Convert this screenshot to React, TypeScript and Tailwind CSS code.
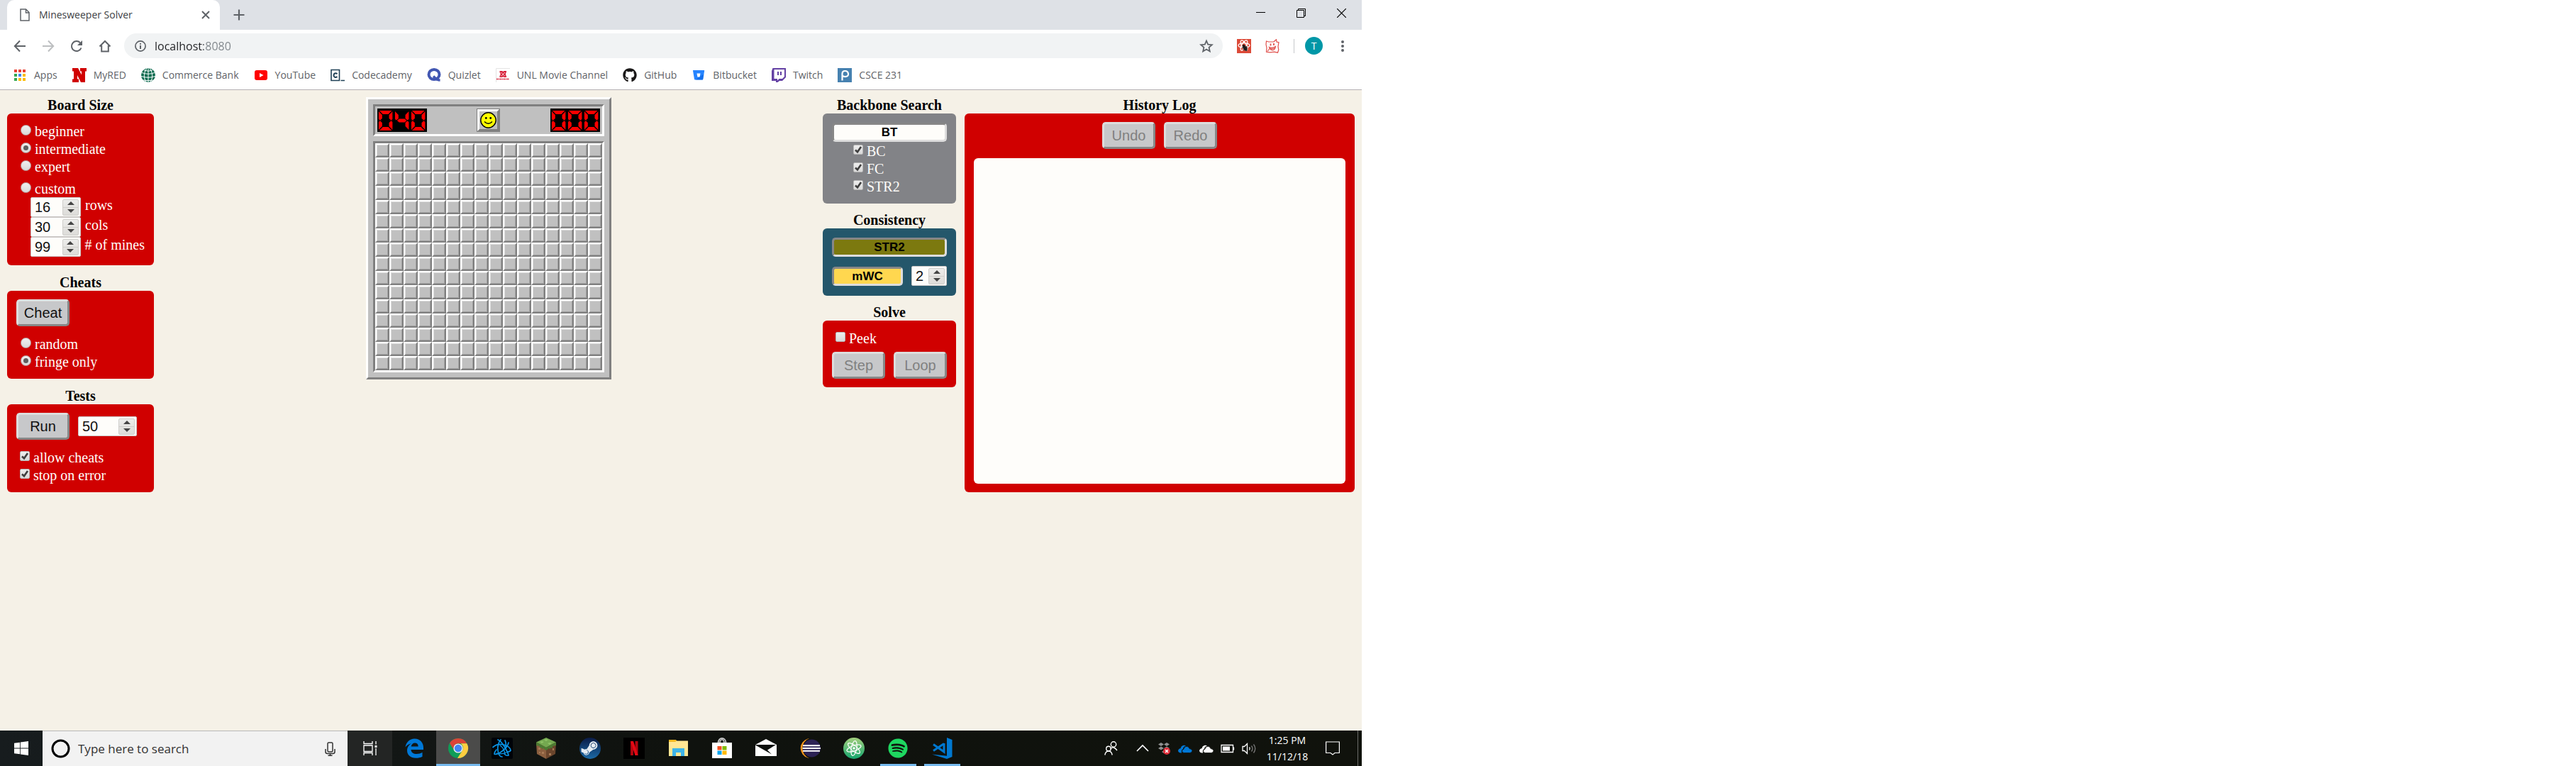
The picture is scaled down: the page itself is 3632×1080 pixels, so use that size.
import { useState, type ReactNode } from "react";
import { FaGithub, FaSpotify, FaSteamSymbol } from "react-icons/fa";

const uiFont = "font-['Open_Sans','Noto_Sans',sans-serif]";

/* ---------- browser chrome ---------- */

function TabStrip() {
  return (
    <div className="flex h-[42px] bg-[#dee1e6] pl-[10px]">
      <div className="flex w-[300px] items-center rounded-t-[10px] bg-white pr-[14px] pl-[18px] text-[#3c4043]">
        <svg className="h-[18px] w-[14px]" viewBox="0 0 14 18" fill="none" stroke="#5f6368" strokeWidth="1.5">
          <path d="M1 1h7.500l4.500 4.500V17H1zM8.500 1v5H13" />
        </svg>
        <span className="ml-[13px] flex-1 text-[14px] leading-5 text-[#3c4043]">Minesweeper Solver</span>
        <button aria-label="Close tab">
          <svg className="size-3" viewBox="0 0 12 12" stroke="#5f6368" strokeWidth="2">
            <path d="M1 1l10 10M11 1L1 11" />
          </svg>
        </button>
      </div>
      <button aria-label="New tab" className="ml-[19px]">
        <svg className="size-4" viewBox="0 0 16 16" stroke="#5f6368" strokeWidth="2.200">
          <path d="M8 .5v15M.5 8h15" />
        </svg>
      </button>
      <div className="ml-auto flex h-[36px]">
        <button aria-label="Minimize" className="grid w-[57px] place-items-center">
          <svg className="h-[13px] w-[13px]" viewBox="0 0 13 13" stroke="#000" strokeWidth="1">
            <path d="M0 5.500h13" />
          </svg>
        </button>
        <button aria-label="Restore" className="grid w-[57px] place-items-center">
          <svg className="h-[13px] w-[13px]" viewBox="0 0 13 13" fill="none" stroke="#000" strokeWidth="1">
            <path d="M.5 2.500h10v10H.5zM2.500 2.500v-2h10v10h-2" />
          </svg>
        </button>
        <button aria-label="Close" className="grid w-[57px] place-items-center">
          <svg className="h-[13px] w-[13px]" viewBox="0 0 13 13" stroke="#000" strokeWidth="1.200">
            <path d="M0 0l13 13M13 0L0 13" />
          </svg>
        </button>
      </div>
    </div>
  );
}

function NavButton({ label, children }: { label: string; children: ReactNode }) {
  return (
    <button aria-label={label} className="grid w-10 place-items-center">
      <svg className="size-[18px]" viewBox="0 0 18 18" fill="none" stroke="#5f6368" strokeWidth="2">
        {children}
      </svg>
    </button>
  );
}

function Toolbar() {
  const [url, setUrl] = useState("localhost:8080");
  return (
    <div className="flex h-[44px] items-center bg-white pt-px pr-2 pl-2">
      <div className="flex w-[167px]">
        <NavButton label="Back">
          <path d="M17 9H2M9 1.500L1.800 9 9 16.500" />
        </NavButton>
        <NavButton label="Forward">
          <path stroke="#bdbfc1" d="M1 9h15M9 1.500L16.200 9 9 16.500" />
        </NavButton>
        <NavButton label="Reload">
          <path d="M15.500 11.500A7 7 0 1 1 14 4.200" />
          <path d="M17 1v7h-7z" fill="#5f6368" stroke="none" />
        </NavButton>
        <NavButton label="Home">
          <path d="M4.200 8v8.500h9.600V8M1.500 9.500L9 2l7.500 7.500" />
        </NavButton>
      </div>
      <div className="flex h-[35px] flex-1 items-center rounded-full bg-[#f1f3f4] pr-[13px] pl-[15px]">
        <svg className="size-4" viewBox="0 0 16 16" fill="none" stroke="#5f6368" strokeWidth="1.700">
          <circle cx="8" cy="8" r="7.100" />
          <path d="M8 7v5M8 4v1.800" strokeWidth="2" />
        </svg>
        <input
          aria-label="Address"
          value={url}
          onChange={(e) => setUrl(e.target.value)}
          className="ml-3 flex-1 bg-linear-to-r from-[#202124] from-[69px] to-[#80868b] to-[69px] bg-clip-text text-[16px] leading-6 text-transparent outline-none"
        />
        <button aria-label="Bookmark this page">
          <svg className="size-[20px]" viewBox="0 0 20 20" fill="none" stroke="#5f6368" strokeWidth="1.800">
            <path d="M10 2.500l2.200 5.200 5.600.5-4.200 3.700 1.200 5.500L10 14.500l-4.800 2.900 1.200-5.500-4.200-3.700 5.600-.5z" />
          </svg>
        </button>
      </div>
      <button aria-label="React developer tools" className="ml-5 bg-[#dc4a38]">
        <svg className="size-5" viewBox="0 0 20 20" fill="none" stroke="#fff" strokeWidth="1.300">
          <ellipse cx="10" cy="9" rx="8" ry="3.300" />
          <ellipse cx="10" cy="9" rx="8" ry="3.300" transform="rotate(60 10 9)" />
          <ellipse cx="10" cy="9" rx="8" ry="3.300" transform="rotate(120 10 9)" />
          <ellipse cx="11.500" cy="13" rx="2.500" ry="4" fill="#1b1b1b" stroke="none" transform="rotate(-35 11.500 13)" />
          <circle cx="9.500" cy="9.500" r="1.800" fill="#1b1b1b" stroke="none" />
          <path stroke="#1b1b1b" strokeWidth="1" d="M7 12h8M9 16l5-6M14 17l-4-7" />
        </svg>
      </button>
      <button aria-label="Extension" className="ml-5">
        <svg className="size-5" viewBox="0 0 20 20" fill="none" stroke="#e0504c" strokeWidth="1.200">
          <path d="M1.500 3l3 1 7.500-.2L15.500.7l.5 3.500 3 .5-1 6 .8 4.500-1.300 4-5-1-6 .6-5-.5.5-5.800-1-5zM3 17.500l3-4" />
          <path d="M5.500 11.500c3 1.500 6 1 9-1-.5 3.500-2 5-4 5.200-2.500.2-4-1.500-5-4.200zM7 13.500c3 .8 5 .3 7-1" />
          <path strokeWidth="1.800" d="M7.500 6.500v3M12 6v3" />
        </svg>
      </button>
      <div className="ml-5 h-5 w-px bg-[#c6c8cb]" />
      <button className="ml-[15px] size-[25px] rounded-full bg-[#0097a7] text-center text-[14px] leading-[25px] text-white">T</button>
      <button aria-label="Menu" className="ml-[25px] mr-[16px]">
        <svg className="h-4 w-[6px]" viewBox="0 0 6 16" fill="#5f6368">
          <circle cx="3" cy="2" r="2" />
          <circle cx="3" cy="8" r="2" />
          <circle cx="3" cy="14" r="2" />
        </svg>
      </button>
    </div>
  );
}

const appColors = ["#ea4335", "#ea4335", "#ea4335", "#34a853", "#4285f4", "#fbbc05", "#34a853", "#fbbc05", "#fbbc05"];

const bookmarks: { name: string; icon: ReactNode }[] = [
  {
    name: "Apps",
    icon: appColors.map((c, i) => <rect key={i} x={2 + (i % 3) * 6} y={2 + Math.floor(i / 3) * 6} width="4" height="4" fill={c} />),
  },
  {
    name: "MyRED",
    icon: <path fill="#d00000" d="M0 0h8l5 9.500V4.500h-2V0h9v4.500h-2V20h-6L7 10v5.500h2V20H0v-4.500h2v-11H0z" />,
  },
  {
    name: "Commerce Bank",
    icon: (
      <>
        <circle cx="10" cy="10" r="10" fill="#0b6b4f" />
        <g fill="none" stroke="#fff" strokeWidth="1">
          <path d="M1 6.500q9 3.500 18 0M0 11.500q10 3.500 20 0M3 17q7 1.500 14 0M4 3q6 2.500 12 0M10 0v20" />
          <path d="M8 0Q1 10 7 20M12 0q7 10 1 20" />
        </g>
      </>
    ),
  },
  {
    name: "YouTube",
    icon: (
      <>
        <rect x="1" y="3" width="18" height="14" rx="3" fill="#f00" />
        <path fill="#fff" d="M8 7l5.500 3L8 13z" />
      </>
    ),
  },
  {
    name: "Codecademy",
    icon: (
      <g fill="none" stroke="#1f4056" strokeWidth="1.600">
        <path d="M1 2.500h11.500v15H1zM14.500 17.500H20" />
        <path strokeWidth="2" d="M9.500 8.200C7 6.500 4.500 7.500 4.500 10.200s2.500 3.700 5 2" />
      </g>
    ),
  },
  {
    name: "Quizlet",
    icon: (
      <g fill="none" stroke="#4257b2">
        <ellipse cx="10" cy="9" rx="7.500" ry="7" strokeWidth="4" />
        <path strokeWidth="3.500" d="M9 11.500l3 3q2 2.500 6.500 2.500" />
      </g>
    ),
  },
  {
    name: "UNL Movie Channel",
    icon: (
      <>
        <path d="M.5 20V.5H20" stroke="#e4e4e4" fill="none" />
        <path d="M5.500 4h4l.7 1.500L11 4h4v2.500h-1v4h1V13h-4l-.8-1.500L9.500 13h-4v-2.500h1v-4h-1z" fill="#d8213b" />
        <path d="M7.500 6l5.500 5.500M13 6l-5.500 5.500" stroke="#fff" strokeWidth=".8" />
        <path d="M1 15.500h18" stroke="#d8213b" strokeWidth="1.500" strokeDasharray="2 .5" />
      </>
    ),
  },
  { name: "GitHub", icon: <FaGithub size={20} color="#191717" /> },
  {
    name: "Bitbucket",
    icon: (
      <>
        <path fill="#2684ff" d="M2.500 3h15q.8 0 .7.8l-2 12q-.1.800-1 .8H5q-.9 0-1-.8l-2-12Q1.800 3 2.500 3z" />
        <path fill="#0c66e4" d="M11 12l6.300-3-1.200 7q-.1.600-1 .6H6z" opacity=".7" />
        <path fill="#fff" d="M7.500 7.500h5l-.9 5H8.400z" />
      </>
    ),
  },
  {
    name: "Twitch",
    icon: (
      <>
        <path fill="#6441a4" d="M1.500 0H20v13l-5 5h-4l-3 2.500H6V18H0V4z" />
        <path fill="#fff" d="M3.500 2H18v10l-3 3h-4.500L8 17.500V15H3.500z" />
        <path stroke="#6441a4" strokeWidth="2" d="M9 5v5M13 5v5" />
      </>
    ),
  },
  {
    name: "CSCE 231",
    icon: (
      <>
        <rect width="20" height="20" fill="#4681b0" />
        <path d="M6.500 17.500V8Q6.500 4 10.500 4T15 8t-4.500 4.200q-2.500 0-3.500-1.500" fill="none" stroke="#fff" strokeWidth="2.200" />
      </>
    ),
  },
];

function BookmarksBar() {
  return (
    <nav className="flex h-[41px] items-center gap-[21px] border-b border-[#b5b1b4] bg-white pl-[18px]">
      {bookmarks.map((b) => (
        <a key={b.name} href="#" className="flex items-center gap-[10px] text-[14px] leading-5 text-[#5f6368]">
          <svg className="size-5" viewBox="0 0 20 20">
            {b.icon}
          </svg>
          {b.name}
        </a>
      ))}
    </nav>
  );
}

/* ---------- form controls ---------- */

function NumberField({ label, initial, width, suffix }: { label: string; initial: number; width: string; suffix?: string }) {
  const [value, setValue] = useState(initial);
  return (
    <label className="flex items-start gap-[6px] leading-[22px] whitespace-nowrap">
      <span className={`flex h-7 items-center rounded-[2px] border border-[#cbc8c6] bg-[#fefdfa] pr-[2px] pl-[5px] ${width}`}>
        <input
          type="number"
          aria-label={label}
          value={value}
          onChange={(e) => setValue(Number(e.target.value))}
          className="w-0 min-w-0 flex-1 [appearance:textfield] font-['Liberation_Sans',sans-serif] text-[20px] leading-6 text-[#111] outline-none [&::-webkit-inner-spin-button]:appearance-none"
        />
        <span className="flex h-[23px] w-[23px] flex-col rounded-[2px] border border-[#cfcecb] bg-linear-to-b from-[#ececea] to-[#dddcd9]">
          <button aria-label={`Increase ${label}`} onClick={() => setValue(value + 1)} className="grid flex-1 place-items-center border-b border-[#cfcecb]">
            <svg className="h-[5px] w-[10px]" viewBox="0 0 10 5" fill="#444">
              <path d="M5 0l5 5H0z" />
            </svg>
          </button>
          <button aria-label={`Decrease ${label}`} onClick={() => setValue(value - 1)} className="grid flex-1 place-items-center">
            <svg className="h-[5px] w-[10px]" viewBox="0 0 10 5" fill="#444">
              <path d="M5 5l5-5H0z" />
            </svg>
          </button>
        </span>
      </span>
      {suffix}
    </label>
  );
}

function Radio({ name, label, checked }: { name: string; label: string; checked?: boolean }) {
  return (
    <label className="flex h-[25px] items-start gap-[5px] pl-[6px] leading-[21px]">
      <input
        type="radio"
        name={name}
        defaultChecked={checked}
        className="mt-px grid size-[15px] appearance-none place-items-center rounded-full border border-[#b9a5a3] bg-linear-to-b from-[#f0f0f0] to-[#dadada] before:size-[7px] before:rounded-full checked:before:bg-[#5e5e5e]"
      />
      {label}
    </label>
  );
}

function Check({ label, checked }: { label: string; checked?: boolean }) {
  return (
    <label className="relative flex h-[25px] items-start gap-[5px] leading-[21px]">
      <input
        type="checkbox"
        defaultChecked={checked}
        className="peer mt-px size-[14px] appearance-none rounded-[2px] border border-[#b5b5b5] bg-linear-to-b from-[#eeeeee] to-[#d9d9d9]"
      />
      <svg className="pointer-events-none absolute top-px left-0 hidden size-[14px] peer-checked:block" viewBox="0 0 14 14" fill="none" stroke="#3f3f3f" strokeWidth="2.600">
        <path d="M3 7.500l3 2.800 5-7.300" />
      </svg>
      {label}
    </label>
  );
}

const raised = "border-t-[#dddddd] border-l-[#dddddd] border-r-[#878787] border-b-[#878787]";

function PushButton({ children, disabled }: { children: string; disabled?: boolean }) {
  return (
    <button
      disabled={disabled}
      className={`block h-[38px] w-[75px] rounded-[5px] border-3 bg-[#c7c8ca] font-['Liberation_Sans',sans-serif] text-[20px] leading-6 text-[#111] disabled:text-[#808080] ${raised}`}
    >
      {children}
    </button>
  );
}

function ToggleButton({ children, className }: { children: string; className: string }) {
  return (
    <button
      aria-pressed="true"
      className={`block h-[27px] rounded-[5px] border-3 border-t-[#878787] border-r-[#dddddd] border-b-[#dddddd] border-l-[#878787] font-['Liberation_Sans',sans-serif] text-[17px] leading-5 font-bold text-black ${className}`}
    >
      {children}
    </button>
  );
}

function Panel({ title, className, children }: { title: string; className: string; children: ReactNode }) {
  return (
    <section className="flex flex-col">
      <h2 className="text-center text-[20px] leading-[23px] font-bold text-black">{title}</h2>
      <div className={`flex-1 rounded-[6px] px-[13px] ${className}`}>{children}</div>
    </section>
  );
}

/* ---------- game board ---------- */

const segments: Record<string, string> = {
  a: "M3 3h18l-5 5H8z",
  b: "M22 4v11l-2 1.500-3-2.500V9z",
  c: "M22 30V19l-2-1.500-3 2.500v5z",
  d: "M3 31h18l-5-5H8z",
  e: "M2 30V19l2-1.500L7 20v5z",
  f: "M2 4v11l2 1.500L7 14V9z",
  g: "M5 17l3-2.500h8l3 2.500-3 2.500H8z",
};
const lit: Record<string, string> = { "0": "abcdef", "4": "fgbc" };

function Counter({ value, label }: { value: string; label: string }) {
  return (
    <div role="img" aria-label={`${label} ${value}`} className="flex h-[33px] w-[70px] bg-black">
      {value.split("").map((digit, i) => (
        <svg key={i} className="h-full flex-1" viewBox="0 0 24 33" preserveAspectRatio="none" fill="#ff0000">
          {lit[digit].split("").map((s) => (
            <path key={s} d={segments[s]} />
          ))}
          {digit === "0" && <path d="M2 17h4M18 17h4" stroke="#7a0000" strokeWidth="1" />}
        </svg>
      ))}
    </div>
  );
}

function Board() {
  return (
    <div className="border-[3px] border-t-white border-r-[#808080] border-b-[#808080] border-l-white bg-[#c0c0c0] p-[7px]">
      <div className="flex items-center justify-between border-[3px] border-t-[#808080] border-r-white border-b-white border-l-[#808080] p-[3px]">
        <Counter label="Mines left" value="040" />
        <button aria-label="New game" className="border border-[#808080]">
          <span className="grid size-[31px] place-items-center border-3 border-t-white border-r-[#808080] border-b-[#808080] border-l-white">
            <svg className="size-[23px]" viewBox="0 0 23 23">
              <circle cx="11.500" cy="11.500" r="10.700" fill="#ff0" stroke="#000" strokeWidth="1.400" />
              <circle cx="8.300" cy="8.500" r="1.400" />
              <circle cx="14.700" cy="8.500" r="1.400" />
              <path d="M6 13.500q5.500 5.500 11 0" fill="none" stroke="#000" strokeWidth="1.400" />
            </svg>
          </span>
        </button>
        <Counter label="Time" value="000" />
      </div>
      <div className="mt-[7px] grid grid-cols-[repeat(16,20px)] border-[3px] border-t-[#808080] border-r-white border-b-white border-l-[#808080]">
        {Array.from({ length: 256 }, (_, i) => (
          <button
            key={i}
            aria-label={`Row ${Math.floor(i / 16) + 1}, column ${(i % 16) + 1}`}
            className="size-5 border-2 border-t-white border-r-[#808080] border-b-[#808080] border-l-white"
          >
            <span className="block size-4 border border-t-[#dfdfdf] border-r-[#a0a0a0] border-b-[#a0a0a0] border-l-[#dfdfdf]" />
          </button>
        ))}
      </div>
    </div>
  );
}

/* ---------- page ---------- */

const scarlet = "bg-[#d00000] text-[#fefdfa]";

function Page() {
  return (
    <main className="flex flex-1 items-start bg-[#f5f1e7] p-[10px] font-['Liberation_Serif',serif] text-[20px]">
      <div className="flex w-[207px] flex-col gap-[13px]">
        <Panel title="Board Size" className={`${scarlet} pt-[15px] pb-3`}>
          <Radio name="size" label="beginner" />
          <Radio name="size" label="intermediate" checked />
          <Radio name="size" label="expert" />
          <div className="mt-[6px]">
            <Radio name="size" label="custom" />
          </div>
          <div className="-mt-[3px] pl-5">
            <NumberField label="rows" suffix="rows" initial={16} width="w-[71px]" />
            <NumberField label="cols" suffix="cols" initial={30} width="w-[71px]" />
            <NumberField label="mines" suffix="# of mines" initial={99} width="w-[71px]" />
          </div>
        </Panel>
        <Panel title="Cheats" className={`${scarlet} pt-3 pb-[9px]`}>
          <PushButton>Cheat</PushButton>
          <div className="mt-[15px]">
            <Radio name="cheat" label="random" />
            <Radio name="cheat" label="fringe only" checked />
          </div>
        </Panel>
        <Panel title="Tests" className={`${scarlet} pt-3 pb-[9px]`}>
          <div className="flex items-center gap-3">
            <PushButton>Run</PushButton>
            <NumberField label="number of tests" initial={50} width="w-[83px]" />
          </div>
          <div className="mt-[15px] pl-[5px]">
            <Check label="allow cheats" checked />
            <Check label="stop on error" checked />
          </div>
        </Panel>
      </div>

      <div className="flex flex-1 justify-center">
        <Board />
      </div>

      <div className="flex w-[188px] flex-col gap-3">
        <Panel title="Backbone Search" className="bg-[#828387] pt-[13px] pb-[9px] text-[#fefdfa]">
          <ToggleButton className="w-full bg-[#fefdfa]">BT</ToggleButton>
          <div className="mt-[3px] pl-[30px]">
            <Check label="BC" checked />
            <Check label="FC" checked />
            <Check label="STR2" checked />
          </div>
        </Panel>
        <Panel title="Consistency" className="bg-[#24576b] pt-[13px] pb-[14px]">
          <ToggleButton className="w-full bg-[#7c790f]">STR2</ToggleButton>
          <div className="mt-[13px] flex items-end gap-3">
            <ToggleButton className="flex-1 bg-[#ffd74f]">mWC</ToggleButton>
            <NumberField label="mWC size" initial={2} width="w-[50px]" />
          </div>
        </Panel>
        <Panel title="Solve" className={`${scarlet} pt-[15px] pb-3`}>
          <div className="pl-[5px]">
            <Check label="Peek" />
          </div>
          <div className="mt-1 flex justify-between">
            <PushButton disabled>Step</PushButton>
            <PushButton disabled>Loop</PushButton>
          </div>
        </Panel>
      </div>

      <div className="ml-3 grid w-[550px] self-start">
        <Panel title="History Log" className={`${scarlet} pt-3 pb-3`}>
          <div className="flex justify-center gap-3">
            <PushButton disabled>Undo</PushButton>
            <PushButton disabled>Redo</PushButton>
          </div>
          <div role="log" className="mt-[13px] h-[459px] rounded-[6px] bg-[#fefdfa]" />
        </Panel>
      </div>
    </main>
  );
}

/* ---------- taskbar ---------- */

type Task = { name: string; icon: ReactNode; state?: "active" | "running" };

const tasks: Task[] = [
  {
    name: "Edge",
    icon: (
      <path
        fill="#0078d7"
        d="M2.500 13.500C3.500 6.500 8.500 1.500 15.500 1.500c8 0 12.500 6 12.500 12.500v3H10.500c.3 4 3.500 6 8 6 3 0 5.500-.8 8-2.200v6c-2.600 1.400-5.700 2-9.200 2C9.800 28.800 5 24.500 5 18.300c0-4.300 2.200-8 6-10-4 .7-6.700 2.700-8.500 5.200zM10.700 12.500h10c0-3.200-1.700-5-4.700-5-2.800 0-4.800 2-5.300 5z"
      />
    ),
  },
  {
    name: "Chrome",
    state: "active",
    icon: (
      <>
        <circle cx="15" cy="15" r="14" fill="#0f9d58" />
        <path fill="#db4437" d="M15 1a14 14 0 0 1 12.300 7.300H15a6.700 6.700 0 0 0-6 9.500L3 7.800A14 14 0 0 1 15 1z" />
        <path fill="#ffcd40" d="M27.300 8.300A14 14 0 0 1 14 29l6.800-10.800c2-3.500 1-7.500-2.300-9.900z" />
        <circle cx="15" cy="15" r="6.600" fill="#f1f1f1" />
        <circle cx="15" cy="15" r="5.200" fill="#4285f4" />
      </>
    ),
  },
  {
    name: "Battle.net",
    icon: (
      <>
        <rect width="30" height="30" rx="2" fill="#000308" />
        <g fill="none" stroke="#0a94e6" strokeWidth="1.700" strokeLinecap="round">
          <path d="M2 13.500Q8 8 17 10t10 8q-1 2-5 2" />
          <path d="M9 3q5 2 10 11t5 11q-3 1-6-2" />
          <path d="M24 7q-1 6-9 12T4 23q0-3 3-6" />
          <path d="M13 3q-5 6-4 15t6 9M19 4q2 4 1 10" />
          <path d="M7 22q6 2 14-1M12 11q6 4 7 12" strokeWidth="1.200" />
        </g>
      </>
    ),
  },
  {
    name: "Minecraft",
    icon: (
      <>
        <path fill="#8b5f3f" d="M1 7l14 7v16L2 23z" />
        <path fill="#6a452c" d="M29 7l-14 7v16l13-7z" />
        <path fill="#74a850" d="M15 0l14 6.500L15 14 1 6.500z" />
        <path fill="#4d7a32" d="M1 6.500L15 14v4l-3-2v-1l-3 1v-2l-3 1v-3l-5-1zM29 6.500L15 14v4l3-2v-1l3 1v-2l3 1v-3l5-1z" />
        <path fill="#a77a55" d="M4 14h3v3H4zM9 20h3v3H9zM5 20h2v2H5zM19 22h3v3h-3zM24 15h2v3h-2z" />
        <path fill="#8fc266" d="M12 3l3-1 3 1-3 2zM6 6l3-1 3 1-3 2zM17 8l3-1 3 1-3 2z" />
      </>
    ),
  },
  {
    name: "Steam",
    icon: (
      <>
        <defs>
          <linearGradient id="steam" x1="0" x2="0" y1="0" y2="1">
            <stop offset="0" stopColor="#0b1b46" />
            <stop offset="1" stopColor="#1c6aa6" />
          </linearGradient>
        </defs>
        <circle cx="15" cy="15" r="15" fill="url(#steam)" />
        <FaSteamSymbol x={1} y={2} size={26} color="#e6ecf2" />
      </>
    ),
  },
  {
    name: "Netflix",
    icon: (
      <>
        <rect width="30" height="30" fill="#000" />
        <path fill="#b1060f" d="M10 5h4v20h-4zM16.500 5h4v20h-4z" />
        <path fill="#e50914" d="M10 5h4l6.500 20h-4z" />
      </>
    ),
  },
  {
    name: "File Explorer",
    icon: (
      <>
        <path fill="#f5b91f" d="M2 3h10l2 2.500V7H2z" />
        <path fill="#ffe694" d="M2 6h9l2-1.500h16V26H2z" />
        <path fill="#3eb4e8" d="M7 26V15h17v11h-5v-5h-7v5z" />
      </>
    ),
  },
  {
    name: "Store",
    icon: (
      <>
        <path d="M9.500 8C9.500-1.500 20.500-1.500 20.500 8M12 8C12 1 18 1 18 8" fill="none" stroke="#cfcfcf" strokeWidth="1.700" />
        <path fill="#fff" d="M1 7h28v21.500q0 .5-.5.500h-27q-.5 0-.5-.5z" />
        <path fill="#f35022" d="M8.500 12h6v5.500h-6z" />
        <path fill="#80bb03" d="M15.500 12h6v5.500h-6z" />
        <path fill="#03a5f0" d="M8.500 18.500h6V24h-6z" />
        <path fill="#ffb903" d="M15.500 18.500h6V24h-6z" />
      </>
    ),
  },
  {
    name: "Mail",
    icon: (
      <>
        <path fill="#fff" d="M0 10L15 2l15 8v16H0z" />
        <path fill="#0c0f0c" d="M0 10h29l-12 7.500 6 6L0 10.500z" />
      </>
    ),
  },
  {
    name: "Eclipse",
    icon: (
      <>
        <path fill="#f7941e" d="M12 1.500A14 14 0 0 0 12 28.500L14 29A15 15 0 0 1 14 1z" />
        <circle cx="17.500" cy="15" r="12.500" fill="#2c2255" />
        <path stroke="#fff" strokeWidth="2" d="M5 11.300h24M4.500 15h25.500M5 18.700h24" />
      </>
    ),
  },
  {
    name: "Atom",
    icon: (
      <>
        <defs>
          <linearGradient id="atom" x1="0" x2="0" y1="0" y2="1">
            <stop offset="0" stopColor="#a4d07e" />
            <stop offset="1" stopColor="#14a56d" />
          </linearGradient>
        </defs>
        <circle cx="15" cy="15" r="15" fill="url(#atom)" />
        <g fill="none" stroke="#fff" strokeWidth="1.200">
          <ellipse cx="15" cy="15" rx="10.500" ry="3.800" transform="rotate(-20 15 15)" />
          <ellipse cx="15" cy="15" rx="10.500" ry="3.800" transform="rotate(40 15 15)" />
          <ellipse cx="15" cy="15" rx="10.500" ry="3.800" transform="rotate(100 15 15)" />
        </g>
        <circle cx="15" cy="15" r="1.800" fill="#fff" />
      </>
    ),
  },
  {
    name: "Spotify",
    state: "running",
    icon: <FaSpotify size={28} x={1} y={1} color="#1ed760" />,
  },
  {
    name: "Visual Studio Code",
    state: "running",
    icon: (
      <>
        <path fill="#0078d0" d="M22 0l7.500 3v24L22 30 1 23.500l21 2.300z" />
        <path fill="none" stroke="#0078d0" strokeWidth="3" d="M18 8.500L3 18.500M3 9.500l15 10.500V8" />
      </>
    ),
  },
];

function TrayIcon({ label, children }: { label: string; children: ReactNode }) {
  return (
    <button aria-label={label} className="grid w-[30px] place-items-center">
      <svg className="size-5" viewBox="0 0 20 20" fill="none" stroke="#fff" strokeWidth="1.300">
        {children}
      </svg>
    </button>
  );
}

const cloudBack = "M4 16.500q-3.500 0-4-3 .5-3 3.500-3.300Q4 7 7 6q2-.8 4 .5-4 1-4 4.500-3 1-2 5.500z";
const cloudFront = "M8.500 16.500q-3-.2-3-2.800Q6 11.500 8 11.200 8.500 7.500 12 7.300q3.200.2 4 3.200 3.500.3 4 3-.3 3-3.500 3z";

function Cloud({ color }: { color: string }) {
  return (
    <>
      <path d={cloudBack} fill={color} stroke="none" />
      <path d={cloudFront} fill={color} stroke="#10120e" strokeWidth=".8" />
    </>
  );
}

function Taskbar() {
  return (
    <footer className="flex h-[50px] bg-linear-to-r from-[#171c1e] via-[#0f120e] to-[#10120c]">
      <button aria-label="Start" className="grid w-[60px] place-items-center">
        <svg className="size-5" viewBox="0 0 20 20" fill="#fff">
          <path d="M0 2.800L8.200 1.700v7.900H0zM9 1.600L20 0v9.600H9zM0 10.400h8.200v7.900L0 17.200zM9 10.400h11V20L9 18.400z" />
        </svg>
      </button>
      <div className="flex w-[430px] items-center border-t border-[#b8b8b8] bg-[#f2f2f2] pr-[17px] pl-3">
        <svg className="size-[27px]" viewBox="0 0 27 27" fill="none" stroke="#000" strokeWidth="3">
          <circle cx="13.500" cy="13.500" r="11.500" />
        </svg>
        <input
          aria-label="Search"
          placeholder="Type here to search"
          className="ml-[11px] flex-1 text-[17px] leading-6 outline-none placeholder:text-[#333]"
        />
        <svg className="h-[20px] w-[15px]" viewBox="0 0 15 20" fill="none" stroke="#333" strokeWidth="1.500">
          <rect x="4" y="1" width="7" height="13" rx="1.500" />
          <path d="M1 10v4q0 2.500 2.500 2.500h8q2.500 0 2.500-2.500v-4M7.500 16.500V20M4.500 19.300h6" />
        </svg>
      </div>
      <button aria-label="Task View" className="grid w-[63px] place-items-center bg-[#232524]">
        <svg className="size-5" viewBox="0 0 20 20" fill="none" stroke="#fff" strokeWidth="1.300">
          <path d="M1 0v3.500h12V0M1 6h12v8.500H1zM1 20v-3.500h12V20M18 0v4.500M18 10v10" />
          <path fill="#fff" stroke="none" d="M16.500 6h3v3h-3z" />
        </svg>
      </button>
      {tasks.map((t) => (
        <button
          key={t.name}
          aria-label={t.name}
          className={`flex w-[62px] flex-col items-center justify-between pt-[10px] ${t.state === "active" ? "bg-[#4b4b4a]" : ""}`}
        >
          <svg className="size-[30px]" viewBox="0 0 30 30">
            {t.icon}
          </svg>
          {t.state && <span className={`h-[3px] bg-[#76b9ed] ${t.state === "active" ? "w-full" : "w-[51px]"}`} />}
        </button>
      ))}
      <div className="ml-auto flex text-white">
        <button aria-label="People" className="grid w-[60px] place-items-center">
          <svg className="h-5 w-[19px]" viewBox="0 0 19 20" fill="none" stroke="#fff" strokeWidth="1.400">
            <circle cx="13" cy="4.500" r="3.700" />
            <path d="M8.500 11q4.500-5 9.500 2" />
            <circle cx="6" cy="10.500" r="3.300" />
            <path d="M.8 19.500q1-5.500 5.200-5.500t5.200 5.500" />
          </svg>
        </button>
        <TrayIcon label="Show hidden icons">
          <path d="M2 14l8-8 8 8" strokeWidth="1.600" />
        </TrayIcon>
        <TrayIcon label="Dropbox">
          <path stroke="none" fill="#8f9090" d="M6 2l4 2.500L6 7 2 4.500zM14 2l4 2.500L14 7l-4-2.500zM6 7.500l4 2.500-4 2.500L2 10zM14 7.500l4 2.500-4 2.500-4-2.500zM10 13l3 2-3 2-3-2z" />
          <circle cx="14" cy="14" r="5" fill="#e02a36" stroke="none" />
          <path d="M12 12l4 4M16 12l-4 4" strokeWidth="1.500" />
        </TrayIcon>
        <TrayIcon label="OneDrive">
          <Cloud color="#0078d7" />
        </TrayIcon>
        <TrayIcon label="OneDrive personal">
          <Cloud color="#ffffff" />
        </TrayIcon>
        <TrayIcon label="Battery">
          <path d="M1 5.500h16.500v10H1zM18.500 8.500v4" />
          <path fill="#fff" stroke="none" d="M3 7.500h10v6H3z" />
        </TrayIcon>
        <TrayIcon label="Volume">
          <path d="M1 7.500h2.500l4-4v14l-4-4H1zM10.500 8.500q1.500 2 0 4" />
          <path stroke="#777" d="M13.500 6.500q3 4 0 8M16.500 4.500q4.500 6 0 12" />
        </TrayIcon>
        <button className="w-[78px] pb-px text-[14px] leading-[23px] text-white">
          <span className="block">1:25 PM</span>
          <span className="block">11/12/18</span>
        </button>
        <button aria-label="Notifications" className="grid w-[50px] place-items-center">
          <svg className="size-5" viewBox="0 0 20 20" fill="none" stroke="#fff" strokeWidth="1.200">
            <path d="M.6 1h18.800v15.500H13L10 19l-3-2.500H.6z" />
          </svg>
        </button>
        <button aria-label="Show desktop" className="ml-[10px] w-[6px] border-l border-[#6c6d69]" />
      </div>
    </footer>
  );
}

export default function App() {
  return (
    <div className={`grid min-h-screen grid-cols-[120fr_107fr] bg-white ${uiFont}`}>
      <div className="flex min-w-0 flex-col">
        <TabStrip />
        <Toolbar />
        <BookmarksBar />
        <Page />
        <Taskbar />
      </div>
    </div>
  );
}
